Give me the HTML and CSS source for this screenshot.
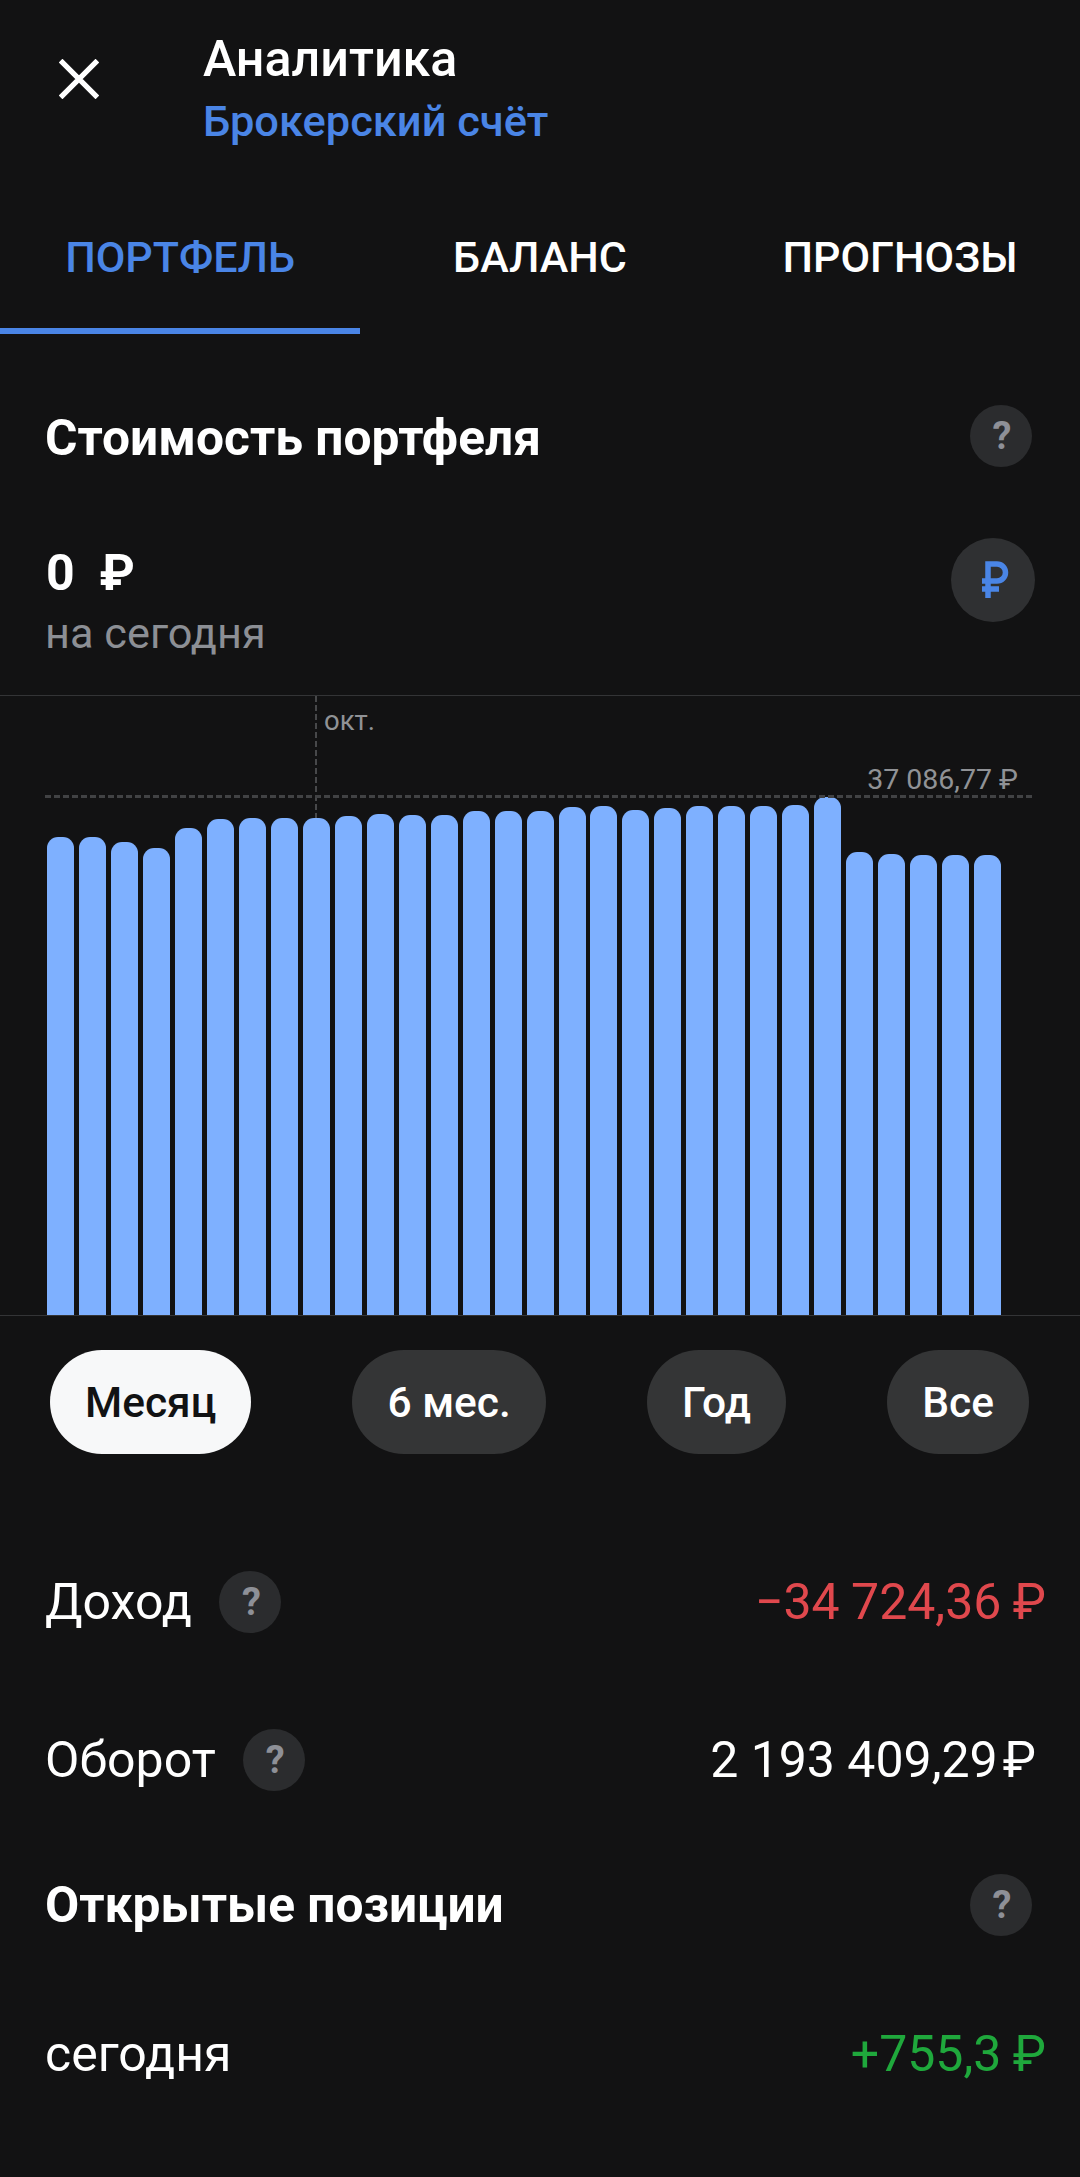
FILE: index.html
```html
<!DOCTYPE html>
<html lang="ru">
<head>
<meta charset="utf-8">
<title>Аналитика</title>
<link rel="stylesheet" href="styles.css">
</head>
<body>
<main class="app">
  <header class="header">
    <svg class="close" viewBox="0 0 38 38" aria-hidden="true"><path d="M1.5 1.5 36.500 36.500M36.500 1.500 1.500 36.500"/></svg>
    <div class="titles">
      <div class="title">Аналитика</div>
      <div class="subtitle">Брокерский счёт</div>
    </div>
  </header>
  <nav class="tabs">
    <div class="tab tab-active">ПОРТФЕЛЬ</div>
    <div class="tab">БАЛАНС</div>
    <div class="tab">ПРОГНОЗЫ</div>
  </nav>
  <section class="section-head first">
    <h2>Стоимость портфеля</h2>
    <span class="help">?</span>
  </section>
  <section class="balance">
    <div>
      <div class="amount">0&nbsp;&nbsp;₽</div>
      <div class="today">на сегодня</div>
    </div>
    <span class="currency">
      <svg viewBox="0 0 28 38" aria-hidden="true"><path d="M7 37V3h9a8.500 8.500 0 0 1 0 17H1M1 28h17"/></svg>
    </span>
  </section>
  <section class="chart">
    <span class="month-line"></span>
    <span class="month">окт.</span>
    <span class="max-line"></span>
    <span class="max-label">37 086,77 ₽</span>
    <div class="bars">
      <i style="height:478px"></i><i style="height:478px"></i><i style="height:473px"></i><i style="height:467px"></i><i style="height:487px"></i><i style="height:496px"></i><i style="height:497px"></i><i style="height:497px"></i><i style="height:497px"></i><i style="height:499px"></i><i style="height:501px"></i><i style="height:500px"></i><i style="height:500px"></i><i style="height:504px"></i><i style="height:504px"></i><i style="height:504px"></i><i style="height:508px"></i><i style="height:509px"></i><i style="height:505px"></i><i style="height:507px"></i><i style="height:509px"></i><i style="height:509px"></i><i style="height:509px"></i><i style="height:510px"></i><i style="height:518px"></i><i style="height:463px"></i><i style="height:461px"></i><i style="height:460px"></i><i style="height:460px"></i><i style="height:460px"></i>
    </div>
  </section>
  <div class="periods">
    <span class="pill pill-active">Месяц</span>
    <span class="pill">6 мес.</span>
    <span class="pill">Год</span>
    <span class="pill">Все</span>
  </div>
  <div class="row row-income">
    <span class="label">Доход <span class="help">?</span></span>
    <span class="value negative">−34 724,36 ₽</span>
  </div>
  <div class="row row-turnover">
    <span class="label">Оборот <span class="help">?</span></span>
    <span class="value turnover">2 193 409,29&#8202;₽</span>
  </div>
  <section class="section-head positions">
    <h2>Открытые позиции</h2>
    <span class="help">?</span>
  </section>
  <div class="row row-today">
    <span class="label">сегодня</span>
    <span class="value positive">+755,3 ₽</span>
  </div>
</main>
</body>
</html>
```
FILE: styles.css
```css
* { box-sizing: border-box; }
html, body { margin: 0; padding: 0; }
body {
  background: #121213;
  color: #fff;
  font-family: Roboto, "Noto Sans", sans-serif;
}
.app { width: 1080px; height: 2177px; overflow: hidden; }

.header { height: 180px; display: flex; padding: 59px 0 0 59px; }
.close { width: 40px; height: 40px; flex: none; }
.close path { stroke: #fff; stroke-width: 5; fill: none; }
.titles { margin: -30px 0 0 104px; }
.title { font-size: 50.2px; font-weight: 500; line-height: 60px; }
.subtitle { font-size: 43.4px; font-weight: 500; line-height: 60px; margin-top: 3px; color: #4a85e6; }

.tabs { display: flex; height: 154px; }
.tab {
  flex: 1;
  text-align: center;
  font-size: 43px;
  font-weight: 500;
  line-height: 50px;
  padding-top: 52px;
}
.tab-active { color: #4a85e6; border-bottom: 6px solid #4a85e6; }

.section-head { display: flex; justify-content: space-between; align-items: center; padding: 0 48px 0 45px; }
.section-head h2 { margin: 0; font-size: 49.7px; font-weight: 700; line-height: 62px; }
.first h2 { position: relative; top: 2px; }
.first { margin-top: 71px; }

.help {
  display: inline-flex;
  align-items: center;
  justify-content: center;
  width: 62px;
  height: 62px;
  padding-left: 2px;
  border-radius: 50%;
  background: #2b2c2e;
  color: #8e9097;
  font-size: 38px;
  font-weight: 700;
  flex: none;
}

.balance { display: flex; justify-content: space-between; align-items: flex-start; padding: 71px 45px 0 45px; height: 228px; }
.amount { font-size: 50px; font-weight: 700; line-height: 56px; margin-top: 7px; padding-left: 1px; }
.today { font-size: 43.3px; line-height: 50px; color: #8c8f95; margin-top: 8px; }
.currency {
  display: flex;
  align-items: center;
  justify-content: center;
  width: 84px;
  height: 84px;
  padding-left: 3px;
  border-radius: 50%;
  background: #2f3032;
}
.currency svg { width: 28px; height: 38px; }
.currency path { stroke: #4a85e6; stroke-width: 5.5; fill: none; }

.chart {
  position: relative;
  height: 621px;
  border-top: 1px solid #333436;
  border-bottom: 1px solid #333436;
  display: flex;
  align-items: flex-end;
}
.bars { display: flex; align-items: flex-end; gap: 4.97px; padding-left: 47px; }
.bars i { display: block; width: 27px; background: #7eb0ff; border-radius: 11px 11px 0 0; }
.month-line {
  position: absolute;
  left: 315px;
  top: 0;
  width: 2px;
  height: 122px;
  background: repeating-linear-gradient(to bottom, #47484a 0 6px, transparent 6px 9px);
}
.month { position: absolute; left: 324px; top: 7px; font-size: 27.5px; line-height: 36px; color: #909296; }
.max-line {
  position: absolute;
  left: 45px;
  top: 99px;
  width: 987px;
  height: 3px;
  background: repeating-linear-gradient(to right, #414244 0 6px, transparent 6px 9px);
}
.max-label { position: absolute; right: 62px; top: 68px; font-size: 28.5px; line-height: 32px; color: #909296; }

.periods { display: flex; justify-content: space-between; padding: 34px 51px 0 50px; height: 138px; }
.pill {
  height: 104px;
  border-radius: 52px;
  background: #343536;
  padding: 0 35px;
  display: flex;
  align-items: center;
  font-size: 42.5px;
  font-weight: 500;
}
.pill-active { background: #f7f8f9; color: #111213; }

.row { display: flex; justify-content: space-between; align-items: center; padding: 0 34px 0 45px; height: 62px; }
.label { display: flex; align-items: center; gap: 27.5px; font-size: 50px; }
.value { font-size: 50px; word-spacing: -1px; }
.negative { color: #e0484d; }
.positive { color: #1fa83c; }
.turnover { margin-right: 10px; word-spacing: 0; }
.row-income { margin-top: 117px; }
.row-turnover { margin-top: 96px; }
.positions { margin-top: 83px; }
.row-today { margin-top: 87px; }
```
